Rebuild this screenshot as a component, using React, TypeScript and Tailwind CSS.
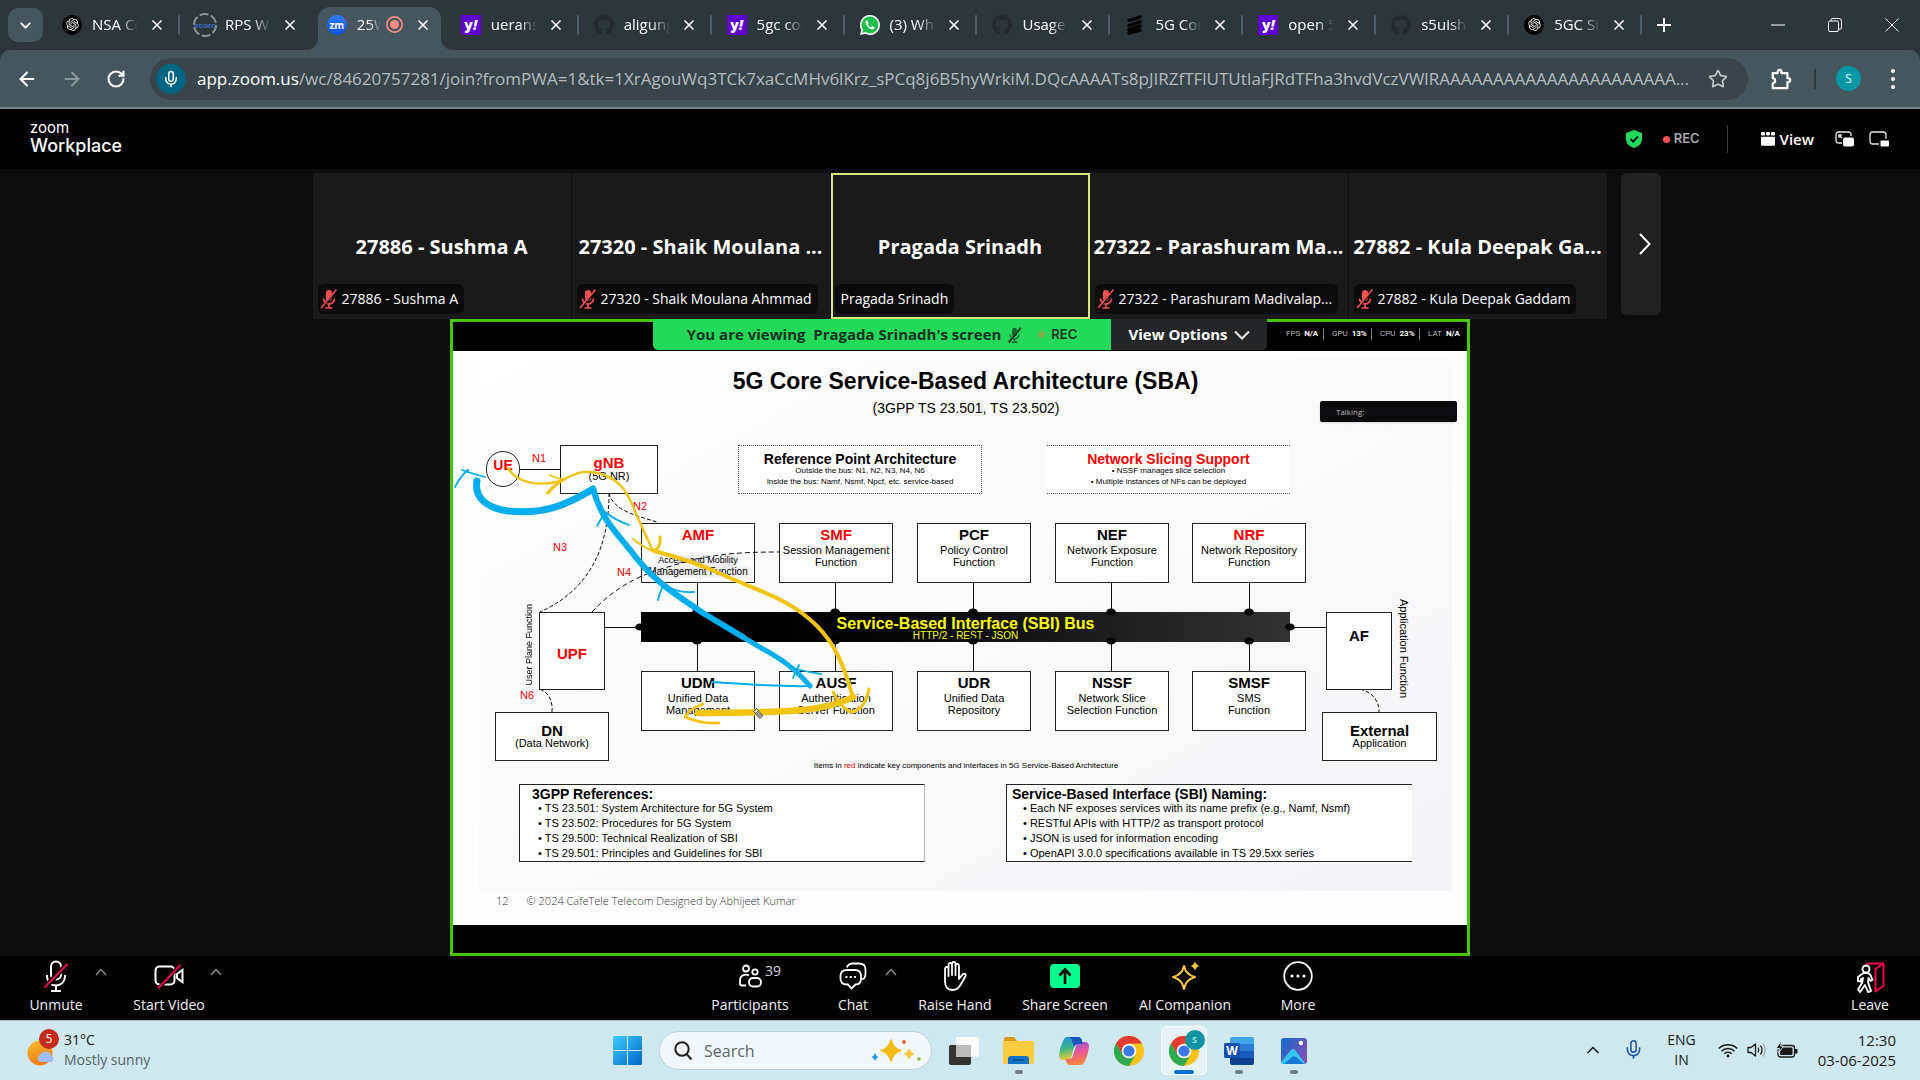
import type { ReactNode } from "react";
import { ArrowLeft, ArrowRight, ChevronDown, ChevronUp, Mic, RotateCw, Star, X } from "lucide-react";
import { RiOpenaiFill } from "react-icons/ri";
import { FaGithub, FaWhatsapp } from "react-icons/fa";

const ui = "font-['Open_Sans','Noto_Sans',sans-serif]";
const arial = "font-['Liberation_Sans',sans-serif]";

/* ---------- browser tabs ---------- */

const OpenAi = () => (
  <span className="flex size-5 items-center justify-center rounded-full bg-black text-white">
    <RiOpenaiFill className="size-[15px]" />
  </span>
);
const Yahoo = () => (
  <span className="flex size-5 items-center justify-center bg-[#5f01d1] text-[14px] leading-none font-extrabold text-white">
    y<i>!</i>
  </span>
);
const GitHub = () => <FaGithub className="size-5 text-[#24292e]" />;
const Rps = () => (
  <svg viewBox="0 0 26 26" className="-mx-[3px] size-[26px]" aria-hidden="true">
    <circle cx="13" cy="13" r="11" fill="none" stroke="#8b9297" strokeWidth="2" strokeDasharray="9 2.5" />
    <text x="13" y="16" textAnchor="middle" fontSize="8" fontWeight="800" fill="#3f6fc4" fontFamily="Liberation Sans">ecorc</text>
  </svg>
);
const ZoomFav = () => (
  <span className="flex size-5 items-center justify-center rounded-full bg-gradient-to-b from-[#2f7cff] to-[#0b4fe0] text-[10px] leading-none font-bold text-white">
    zm
  </span>
);
const WhatsApp = () => (
  <svg viewBox="0 0 20 20" className="size-5" aria-hidden="true">
    <path d="M10 0a10 10 0 1 1-4.800 18.800L0 20l1.300-5A10 10 0 0 1 10 0Z" fill="#fff" />
    <path d="M10 1.600a8.400 8.400 0 1 1-4.500 15.500L2.300 17.900l.8-3A8.400 8.400 0 0 1 10 1.600Z" fill="#1fbf4c" />
    <path d="M7 5.200c-1.200.3-1.700 1.600-1.300 3 .9 3 3 5.200 6 6 1.500.4 2.900-.3 3-1.800l-2.400-1.300-1.200 1.300c-1.500-.6-2.700-1.800-3.300-3.200L8.900 8Z" fill="#fff" />
  </svg>
);
const Stripes = () => (
  <svg viewBox="0 0 20 20" className="size-5" aria-hidden="true">
    <path d="M4 5.500 15 2M4 10.500 15 7M4 14.500 15 11M4 18 15 15" stroke="#000" strokeWidth="3.400" strokeLinecap="round" />
  </svg>
);

type Tab = { title: string; icon: ReactNode; active?: boolean; bar?: boolean };
const tabs: Tab[] = [
  { title: "NSA Core", icon: <OpenAi />, bar: true },
  { title: "RPS Wir", icon: <Rps /> },
  { title: "25W", icon: <ZoomFav />, active: true },
  { title: "ueransim", icon: <Yahoo />, bar: true },
  { title: "aligungr", icon: <GitHub />, bar: true },
  { title: "5gc core", icon: <Yahoo />, bar: true },
  { title: "(3) Wha", icon: <WhatsApp />, bar: true },
  { title: "Usage ", icon: <GitHub />, bar: true },
  { title: "5G Core", icon: <Stripes />, bar: true },
  { title: "open 5g", icon: <Yahoo />, bar: true },
  { title: "s5uishid", icon: <GitHub />, bar: true },
  { title: "5GC Sim", icon: <OpenAi />, bar: true },
];

function BrowserTab({ tab }: { tab: Tab }) {
  return (
    <div className="relative flex min-w-0 flex-1 items-end px-[5px]">
      <div
        className={
          tab.active
            ? "relative flex h-[43px] w-full items-center rounded-t-[12px] bg-[#46565f] pr-[10px] pb-2 pl-[9px]"
            : "relative flex h-[43px] w-full items-center pr-[10px] pb-2 pl-[10px]"
        }
      >
        {tab.active && (
          <>
            <svg viewBox="0 0 12 12" className="absolute bottom-0 -left-3 size-3" aria-hidden="true">
              <path d="M12 0v12H0A12 12 0 0 0 12 0Z" fill="#46565f" />
            </svg>
            <svg viewBox="0 0 12 12" className="absolute -right-3 bottom-0 size-3" aria-hidden="true">
              <path d="M0 0v12h12A12 12 0 0 1 0 0Z" fill="#46565f" />
            </svg>
          </>
        )}
        <button className="flex min-w-0 flex-1 items-center gap-[10px] text-left">
          <span className="shrink-0">{tab.icon}</span>
          <span
            className={
              tab.active
                ? "w-6 overflow-hidden [mask-image:linear-gradient(to_right,#000_50%,transparent)] text-[15px] whitespace-nowrap"
                : "w-[46px] overflow-hidden [mask-image:linear-gradient(to_right,#000_60%,transparent)] text-[15px] whitespace-nowrap"
            }
          >
            {tab.title}
          </span>
          {tab.active && (
            <svg viewBox="0 0 16 16" className="-ml-[5px] size-[17px] shrink-0" aria-label="Recording">
              <circle cx="8" cy="8" r="7.200" fill="none" stroke="#f28b82" strokeWidth="1.600" />
              <circle cx="8" cy="8" r="4.300" fill="#f28b82" />
            </svg>
          )}
        </button>
        <button aria-label="Close tab" className="shrink-0">
          <X className="size-4" strokeWidth={2.500} />
        </button>
      </div>
      {tab.bar && <span className="absolute top-[15px] right-0 h-5 w-[2px] rounded bg-[#4c5e67]" />}
    </div>
  );
}

function BrowserChrome() {
  return (
    <header className="bg-[#2c363b] text-white">
      <div className="flex h-[50px] items-stretch pl-2">
        <button aria-label="Search tabs" className="mt-2 flex h-[34px] w-[35px] items-center justify-center rounded-[10px] bg-[#46565f]">
          <ChevronDown className="size-[17px]" strokeWidth={2.800} />
        </button>
        <nav className="ml-[4px] flex min-w-0 flex-1">
          {tabs.map((t) => (
            <BrowserTab key={t.title} tab={t} />
          ))}
        </nav>
        <button aria-label="New tab" className="ml-[12px] flex w-5 items-center justify-center">
          <svg viewBox="0 0 14 14" className="size-[14px]"><path d="M7 0v14M0 7h14" stroke="#fff" strokeWidth="2" /></svg>
        </button>
        <div className="ml-[75px] flex">
          <button aria-label="Minimize" className="flex w-[57px] items-center justify-center">
            <svg viewBox="0 0 14 14" className="size-[14px]"><path d="M0 7h14" stroke="#fff" /></svg>
          </button>
          <button aria-label="Restore" className="flex w-[57px] items-center justify-center">
            <svg viewBox="0 0 14 14" className="size-[14px]" fill="none" stroke="#fff">
              <rect x=".5" y="3" width="10" height="10.500" rx="1.500" />
              <path d="M3 3V1.500Q3 .5 4 .5h7Q13.500 .5 13.500 3v7Q13.500 11 12.500 11H10.500" />
            </svg>
          </button>
          <button aria-label="Close window" className="flex w-[57px] items-center justify-center">
            <svg viewBox="0 0 14 14" className="size-[14px]"><path d="M.5.5l13 13M13.500.5l-13 13" stroke="#fff" /></svg>
          </button>
        </div>
      </div>
      <div className="flex h-[59px] items-center rounded-t-[10px] border-b-2 border-[#6f848d] bg-[#46565f] pr-[19px] pl-4">
        <div className="flex w-[134px] items-center gap-[23px]">
          <button aria-label="Back"><ArrowLeft className="size-[22px]" strokeWidth={2.200} /></button>
          <button aria-label="Forward" className="text-[#8a979d]"><ArrowRight className="size-[22px]" strokeWidth={2.200} /></button>
          <button aria-label="Reload"><RotateCw className="size-5" strokeWidth={2.500} /></button>
        </div>
        <div className="flex h-[42px] min-w-0 flex-1 items-center rounded-full bg-[#3a454b] pr-[20px] pl-[6px]">
          <button aria-label="Microphone in use" className="mr-[11px] flex size-[30px] shrink-0 items-center justify-center rounded-full bg-[#006684]">
            <Mic className="size-[18px]" />
          </button>
          <label htmlFor="url" className="text-[17px] leading-6">app.zoom.us</label>
          <input
            id="url"
            readOnly
            className="min-w-0 flex-1 bg-transparent text-[17px] leading-6 text-ellipsis text-[#b4babd] outline-none"
            value="/wc/84620757281/join?fromPWA=1&tk=1XrAgouWq3TCk7xaCcMHv6lKrz_sPCq8j6B5hyWrkiM.DQcAAAATs8pJIRZfTFlUTUtIaFJRdTFha3hvdVczVWlRAAAAAAAAAAAAAAAAAAAAAA..."
          />
          <button aria-label="Bookmark" className="ml-[17px] text-[#c3c8ca]"><Star className="size-5" strokeWidth={2} /></button>
        </div>
        <button aria-label="Extensions" className="ml-[22px]">
          <svg viewBox="0 0 24 24" className="size-[22px]" fill="none" stroke="#fff" strokeWidth="2.400" strokeLinejoin="round">
            <path d="M3 5.500h5.500V4a2 2 0 0 1 4 0v1.500H19V11h.8a2.200 2.200 0 0 1 0 4.400H19V22H3v-5.500a2.600 2.600 0 0 0 0-5.200Z" />
          </svg>
        </button>
        <span className="ml-[22px] h-5 w-[2px] bg-[#2e393f]" />
        <button className="ml-[20px] flex size-[25px] items-center justify-center rounded-full bg-[#0097a7] text-[12px]">S</button>
        <button aria-label="Browser menu" className="ml-[24px] flex w-4 flex-col items-center gap-[4px]">
          <span className="size-1 rounded-full bg-white" />
          <span className="size-1 rounded-full bg-white" />
          <span className="size-1 rounded-full bg-white" />
        </button>
      </div>
    </header>
  );
}

/* ---------- meeting header ---------- */

function MeetingHeader() {
  return (
    <div className="flex h-[60px] items-center bg-black pr-[31px] pl-[30px] text-white">
      <div className="pb-1 font-[Inter,sans-serif]">
        <div className="text-[15px] leading-[16px]">zoom</div>
        <div className="text-[18px] leading-[19px] font-medium">Workplace</div>
      </div>
      <div className="ml-auto flex items-center">
        <svg viewBox="0 0 16 18" className="h-[18px] w-4" aria-label="Encrypted">
          <path d="M8 0 16 3v6c0 4.500-3.500 7.500-8 9-4.500-1.500-8-4.500-8-9V3Z" fill="#23d959" />
          <path d="m4.500 9 2.600 2.600L12 6.500" fill="none" stroke="#000" strokeWidth="1.800" />
        </svg>
        <span className="ml-[21px] size-[7px] rounded-full bg-[#ff5050]" />
        <span className="ml-[4px] font-[Inter,sans-serif] text-[13px] font-semibold text-[#a5a5a5]">REC</span>
        <span className="mr-[33px] ml-[27px] h-7 w-px bg-[#404040]" />
        <button className="flex items-center gap-[5px] text-[15px] font-semibold">
          <svg viewBox="0 0 14 14" className="size-[14px]" fill="#fff">
            <rect width="4" height="3.500" rx="1" /><rect x="5" width="4" height="3.500" rx="1" /><rect x="10" width="4" height="3.500" rx="1" />
            <rect y="4.800" width="14" height="9" rx="1" />
          </svg>
          View
        </button>
        <button aria-label="Floating window" className="ml-[21px]">
          <svg viewBox="0 0 20 16" className="h-4 w-5" fill="none" stroke="#e8e8e8" strokeWidth="1.300">
            <path d="M7 12H3.500A2.500 2.500 0 0 1 1 9.500v-6A2.500 2.500 0 0 1 3.500 1h10A2.500 2.500 0 0 1 16 3.500V5M4 4l3 3M4 6.800V4h2.800" />
            <rect x="8" y="6.500" width="11" height="9" rx="2" fill="#fff" stroke="none" />
          </svg>
        </button>
        <button aria-label="Minimize meeting" className="ml-[14px]">
          <svg viewBox="0 0 20 16" className="h-4 w-5" fill="none" stroke="#e8e8e8" strokeWidth="1.300">
            <path d="M10 13H3.500A2.500 2.500 0 0 1 1 10.500v-7A2.500 2.500 0 0 1 3.500 1h11A2.500 2.500 0 0 1 17 3.500V8" />
            <rect x="11.500" y="9.500" width="8.500" height="6" rx="1" fill="#fff" stroke="none" />
          </svg>
        </button>
      </div>
    </div>
  );
}

/* ---------- participant strip ---------- */

const people = [
  { name: "27886 - Sushma A", label: "27886 - Sushma A", muted: true },
  { name: "27320 - Shaik Moulana ...", label: "27320 - Shaik Moulana Ahmmad", muted: true },
  { name: "Pragada Srinadh", label: "Pragada Srinadh", speaking: true },
  { name: "27322 - Parashuram Ma...", label: "27322 - Parashuram Madivalap...", muted: true },
  { name: "27882 - Kula Deepak Ga...", label: "27882 - Kula Deepak Gaddam", muted: true },
];

const MutedMic = ({ className }: { className: string }) => (
  <svg viewBox="0 0 18 20" className={className} aria-hidden="true">
    <rect x="6" y="1" width="6" height="11" rx="3" fill="currentColor" />
    <path d="M3.500 9.500a5.500 5.500 0 0 0 11 0M9 15v4M5.500 19h7" fill="none" stroke="currentColor" strokeWidth="1.700" />
    <path d="M17 1.500 2 19.500" stroke="#0d0d0d" strokeWidth="1.500" />
    <path d="M16.500.5 1 19" stroke="currentColor" strokeWidth="1.500" />
  </svg>
);

function ParticipantStrip() {
  return (
    <div className="grid grid-cols-[1fr_auto_1fr] pt-1 text-white">
      <ul className="col-start-2 flex h-[146px]">
        {people.map((p) => (
          <li
            key={p.name}
            className={
              p.speaking
                ? "relative flex w-[259px] items-center justify-center border-2 border-[#d9e87c] bg-[#1a1a1a] pt-[2px]"
                : "relative flex w-[259px] items-center justify-center border-r border-[#0d0d0d] bg-[#1a1a1a] pt-[2px]"
            }
          >
            <span className="text-[20px] leading-7 font-bold whitespace-nowrap">{p.name}</span>
            <span
              className={
                p.speaking
                  ? "absolute bottom-[3px] left-[2px] flex h-[30px] items-center rounded-[6px] bg-[#0b0b0b] px-[6px] pb-[2px] text-[14px] whitespace-nowrap"
                  : "absolute bottom-[5px] left-[5px] flex h-[30px] items-center gap-[4px] rounded-[6px] bg-[#0b0b0b] pr-[6px] pb-[2px] pl-[2px] text-[14px] whitespace-nowrap"
              }
            >
              {p.muted && <MutedMic className="mt-[2px] h-5 w-[18px] text-[#f4504f]" />}
              {p.label}
            </span>
          </li>
        ))}
      </ul>
      <button aria-label="Next participants" className="ml-[13px] flex h-[142px] w-10 items-center justify-center rounded-[6px] bg-[#212121]">
        <svg viewBox="0 0 12 22" className="ml-2 h-[22px] w-3" fill="none" stroke="#fff" strokeWidth="2"><path d="m1 1 9.500 10L1 21" /></svg>
      </button>
    </div>
  );
}

/* ---------- shared slide ---------- */

type Fn = { title: string; lines: string[]; red?: boolean; at: string };
const functions: Fn[] = [
  { title: "SMF", lines: ["Session Management", "Function"], red: true, at: "left-[326px] top-[172px]" },
  { title: "PCF", lines: ["Policy Control", "Function"], at: "left-[464px] top-[172px]" },
  { title: "NEF", lines: ["Network Exposure", "Function"], at: "left-[602px] top-[172px]" },
  { title: "NRF", lines: ["Network Repository", "Function"], red: true, at: "left-[739px] top-[172px]" },
  { title: "UDM", lines: ["Unified Data", "Management"], at: "left-[188px] top-[320px]" },
  { title: "AUSF", lines: ["Authentication", "Server Function"], at: "left-[326px] top-[320px]" },
  { title: "UDR", lines: ["Unified Data", "Repository"], at: "left-[464px] top-[320px]" },
  { title: "NSSF", lines: ["Network Slice", "Selection Function"], at: "left-[602px] top-[320px]" },
  { title: "SMSF", lines: ["SMS", "Function"], at: "left-[739px] top-[320px]" },
];

const columns = [244, 382, 520, 658, 796];

const references = [
  "TS 23.501: System Architecture for 5G System",
  "TS 23.502: Procedures for 5G System",
  "TS 29.500: Technical Realization of SBI",
  "TS 29.501: Principles and Guidelines for SBI",
];
const naming = [
  "Each NF exposes services with its name prefix (e.g., Namf, Nsmf)",
  "RESTful APIs with HTTP/2 as transport protocol",
  "JSON is used for information encoding",
  "OpenAPI 3.0.0 specifications available in TS 29.5xx series",
];

function SlideLines() {
  return (
    <svg viewBox="0 0 1014 574" className="absolute inset-0 h-full w-full" fill="none" stroke="#111" aria-hidden="true">
      <path d="M67 118.500h40M152 276.500h35M837 276.500h36" strokeWidth="1" />
      {columns.map((x) => (
        <path key={x} d={`M${x + 0.5} 231v30M${x + 0.5} 290v30`} />
      ))}
      <path d="M156 142C156 195 138 238 87 261M156 142C160 160 185 165 204 171M87 338C96 342 100 350 99 361M907 338C918 341 926 348 926 361" strokeDasharray="4 2" />
    </svg>
  );
}

function SlideDots() {
  return (
    <svg viewBox="0 0 1014 574" className="absolute inset-0 h-full w-full" aria-hidden="true">
      {columns.map((x) => (
        <g key={x}>
          <ellipse cx={x} cy="261" rx="4.800" ry="3.600" />
          <ellipse cx={x} cy="290" rx="4.800" ry="3.600" />
        </g>
      ))}
      <ellipse cx="187" cy="276" rx="4.800" ry="3.600" />
      <ellipse cx="837" cy="276" rx="4.800" ry="3.600" />
      <path d="M139 261C160 238 185 224 215 216C255 203 285 201 326 201" fill="none" stroke="#111" strokeDasharray="5 3" />
    </svg>
  );
}

function Ink() {
  return (
    <svg viewBox="0 0 1014 574" className="absolute inset-0 h-full w-full" fill="none" strokeLinecap="round" strokeLinejoin="round" aria-hidden="true">
      <g stroke="#00adef">
        <path d="M24 130C21 147 34 157 55 160C92 164 115 153 140 138" strokeWidth="7" />
        <path d="M140 138C149 168 160 178 178 200C200 230 222 243 250 262L290 286" strokeWidth="6" />
        <path d="M288 285L310 298C328 308 343 318 357 335" strokeWidth="5" />
        <path d="M357 335C325 336 292 333 259 331" strokeWidth="2" />
        <path d="M2 136C6 128 10 123 15 119M9 119Q20 123 32 126M15 121V119" strokeWidth="1.800" />
        <path d="M144 175L152 161Q162 169 176 174M205 249Q207 240 211 234M217 237Q228 242 241 241M340 327Q343 320 346 314M343 318Q355 321 368 323" strokeWidth="1.800" />
      </g>
      <g stroke="#f2c40f">
        <path d="M55 117C64 132 85 135 103 131C115 128 122 120 136 121C166 123 175 141 184 165L199 198" strokeWidth="2.400" />
        <path d="M97 124Q104 128 112 128Q102 133 94 142M180 188Q190 196 200 200" strokeWidth="2" />
        <path d="M112 128Q102 133 95 142M207 186Q208 198 201 199" strokeWidth="3" />
        <path d="M201 200C230 207 252 215 277 227C315 243 340 251 364 275C382 293 391 315 399 343" strokeWidth="4" />
        <path d="M400 346C368 363 315 361 245 362" strokeWidth="6.500" />
        <path d="M250 353Q236 358 232 366Q248 373 266 372" strokeWidth="2.600" />
        <path d="M380 341Q388 357 398 361Q412 359 416 338" strokeWidth="3" />
      </g>
      <g transform="translate(304 358) rotate(50)" stroke="#333" strokeWidth=".8">
        <rect width="9" height="4" fill="#eee" />
        <path d="M2 1.300h6M2 2.700h6" />
      </g>
    </svg>
  );
}

const boxBase = "absolute flex flex-col items-center border border-[#222] bg-white text-center";

function Slide() {
  return (
    <div className={`relative h-[574px] w-[1014px] overflow-hidden bg-[#fefdff] text-black ${arial}`}>
      <div className="absolute top-[7px] left-[26px] h-[533px] w-[973px] bg-gradient-to-br from-white via-[#fafafa] to-[#f5f4f8]" />
      <h1 className="absolute top-[16px] right-0 left-[11px] text-center text-[23px] leading-7 font-bold">
        5G Core Service-Based Architecture (SBA)
      </h1>
      <p className="absolute top-[48px] right-0 left-[12px] text-center text-[14px] leading-[18px]">(3GPP TS 23.501, TS 23.502)</p>
      <SlideLines />

      <div className="absolute top-[50px] left-[867px] flex h-[21px] w-[137px] items-center rounded-[2px] bg-[#0c0b0e] pl-[16px] font-['Open_Sans',sans-serif] text-[8px] text-[#bbb] shadow">
        Talking:
      </div>

      <div className="absolute top-[100px] left-[33px] flex h-[36px] w-[34px] justify-center rounded-full border border-[#222] bg-white pt-[5px] text-[14px] leading-4 font-bold text-[#f00]">UE</div>
      <div className={`${boxBase} top-[94px] left-[107px] h-[49px] w-[98px] pt-[9px]`}>
        <b className="text-[15px] leading-4 text-[#f00]">gNB</b>
        <span className="text-[11px] leading-[10px]">(5G NR)</span>
      </div>
      <div className={`${boxBase} top-[172px] left-[188px] h-[60px] w-[114px] pt-[3px]`}>
        <b className="text-[15px] leading-4 text-[#f00]">AMF</b>
        <span className="mt-[12px] bg-[#f1f0f2] text-[9px] leading-[11px]">Access and Mobility</span>
        <span className="bg-[#f1f0f2] text-[10px] leading-[12px] whitespace-nowrap">Management Function</span>
      </div>
      {functions.map((f) => (
        <div key={f.title} className={`${boxBase} ${f.at} h-[60px] w-[114px] pt-[3px]`}>
          <b className={f.red ? "mb-[1px] text-[15px] leading-4 text-[#f00]" : "mb-[1px] text-[15px] leading-4"}>{f.title}</b>
          {f.lines.map((l) => (
            <span key={l} className="text-[11px] leading-[12px] whitespace-nowrap">{l}</span>
          ))}
        </div>
      ))}

      <div className="absolute top-[94px] left-[285px] h-[49px] w-[244px] border border-dotted border-[#555] bg-white pt-[5px] text-center">
        <b className="block text-[14px] leading-4">Reference Point Architecture</b>
        <p className="text-[8px] leading-[7px]">Outside the bus: N1, N2, N3, N4, N6</p>
        <p className="mt-[1px] text-[8px] leading-[14px]">Inside the bus: Namf, Nsmf, Npcf, etc. service-based</p>
      </div>
      <div className="absolute top-[94px] left-[594px] h-[49px] w-[243px] border-y border-dotted border-[#555] bg-white pt-[5px] text-center">
        <b className="block text-[14px] leading-4 text-[#f00]">Network Slicing Support</b>
        <p className="text-[8px] leading-[7px]">• NSSF manages slice selection</p>
        <p className="mt-[1px] text-[8px] leading-[14px]">• Multiple instances of NFs can be deployed</p>
      </div>

      <div className="absolute top-[261px] left-[188px] h-[30px] w-[649px] bg-gradient-to-r from-black to-[#333] pt-[4px] text-center text-[#ff0]">
        <b className="block text-[16px] leading-4">Service-Based Interface (SBI) Bus</b>
        <span className="block text-[10px] leading-[7px]">HTTP/2 - REST - JSON</span>
      </div>

      <div className={`${boxBase} top-[261px] left-[86px] h-[78px] w-[66px] justify-center pt-[6px]`}>
        <b className="text-[15px] leading-4 text-[#f00]">UPF</b>
      </div>
      <div className={`${boxBase} top-[261px] left-[873px] h-[78px] w-[66px] pt-[15px]`}>
        <b className="text-[15px] leading-4">AF</b>
      </div>
      <div className={`${boxBase} top-[361px] left-[42px] h-[49px] w-[114px] pt-[10px]`}>
        <b className="text-[15px] leading-4">DN</b>
        <span className="text-[11px] leading-[9px]">(Data Network)</span>
      </div>
      <div className={`${boxBase} top-[361px] left-[869px] h-[49px] w-[115px] pt-[10px]`}>
        <b className="text-[15px] leading-4">External</b>
        <span className="text-[11px] leading-[9px]">Application</span>
      </div>
      <span className="absolute top-[253px] left-[70px] rotate-180 text-[9px] leading-3 whitespace-nowrap [writing-mode:vertical-rl]">User Plane Function</span>
      <span className="absolute top-[248px] left-[945px] text-[11px] leading-3 whitespace-nowrap [writing-mode:vertical-rl]">Application Function</span>

      <SlideDots />
      <div className="text-[11px] leading-3 text-[#f00]">
        <span className="absolute top-[101px] left-[79px]">N1</span>
        <span className="absolute top-[149px] left-[180px]">N2</span>
        <span className="absolute top-[190px] left-[100px]">N3</span>
        <span className="absolute top-[215px] left-[164px]">N4</span>
        <span className="absolute top-[338px] left-[67px]">N6</span>
      </div>

      <p className="absolute top-[409px] right-0 left-[12px] text-center text-[8px] leading-3">
        Items in <span className="text-[#f00]">red</span> indicate key components and interfaces in 5G Service-Based Architecture
      </p>
      <div className="absolute top-[433px] left-[66px] h-[78px] w-[406px] border border-[#222] border-r-[#bbb] bg-white pt-[2px] pl-[12px]">
        <b className="block text-[14px] leading-[14px]">3GPP References:</b>
        <ul className="pl-[6px] text-[11px] leading-[15px]">
          {references.map((r) => <li key={r}>• {r}</li>)}
        </ul>
      </div>
      <div className="absolute top-[433px] left-[553px] h-[78px] w-[406px] border border-r-0 border-[#222] bg-white pt-[2px] pl-[5px]">
        <b className="block text-[14px] leading-[14px]">Service-Based Interface (SBI) Naming:</b>
        <ul className="pl-[11px] text-[11px] leading-[15px]">
          {naming.map((r) => <li key={r}>• {r}</li>)}
        </ul>
      </div>
      <div className="absolute top-[542px] left-[43px] flex gap-[18px] font-['Open_Sans',sans-serif] text-[11px] leading-4 font-light text-[#333]">
        <span>12</span>
        <span>© 2024 CafeTele Telecom Designed by Abhijeet Kumar</span>
      </div>
      <Ink />
    </div>
  );
}

const stats = [
  ["FPS", "N/A"],
  ["GPU", "13%"],
  ["CPU", "23%"],
  ["LAT", "N/A"],
];

function SharedScreen() {
  return (
    <section className="relative mx-auto flex w-fit flex-1 flex-col border-[3px] border-[#4bc405] bg-black">
      <div className="absolute -top-[3px] left-1/2 flex h-[31px] -translate-x-1/2 overflow-hidden rounded-b-[5px] whitespace-nowrap">
        <div className="flex w-[458px] items-center justify-center gap-[6px] bg-[#23d959] text-[15px] font-bold text-[#15351f]">
          <span>You are viewing&nbsp; Pragada Srinadh's screen</span>
          <MutedMic className="h-4 w-[15px] text-[#15602d]" />
          <span className="ml-[10px] size-[7px] rounded-full bg-[#7fae4c]" />
          <span className="font-[Inter,sans-serif] text-[13px] font-semibold">REC</span>
        </div>
        <button className="flex w-[156px] items-center justify-center gap-[6px] bg-[#242628] text-[15px] font-bold text-white">
          View Options
          <svg viewBox="0 0 16 10" className="h-[10px] w-4" fill="none" stroke="#ddd" strokeWidth="2.200"><path d="m1 1.500 7 7 7-7" /></svg>
        </button>
      </div>
      <dl className="flex h-[29px] items-center justify-end pb-[6px] font-[Roboto,sans-serif] text-[8px] text-[#bbb]">
        {stats.map(([k, v], i) => (
          <div key={k} className={i ? "flex w-12 gap-[4px] border-l border-[#777] pl-[8px]" : "flex w-[37px] gap-[4px]"}>
            <dt>{k}</dt>
            <dd className="font-bold text-white">{v}</dd>
          </div>
        ))}
      </dl>
      <Slide />
    </section>
  );
}

/* ---------- meeting controls ---------- */

function Control({ label, width, children }: { label: string; width: string; children: ReactNode }) {
  return (
    <button className={`relative flex flex-col items-center ${width}`}>
      <span className="flex h-[39px] items-center justify-center">{children}</span>
      <span className="text-[14px] leading-5 font-medium whitespace-nowrap">{label}</span>
    </button>
  );
}
const More = ({ label }: { label: string }) => (
  <button aria-label={label} className="flex h-8 w-5 items-center justify-center text-[#8c8c8c]">
    <svg viewBox="0 0 12 8" className="h-2 w-3" fill="none" stroke="currentColor" strokeWidth="1.500"><path d="m1 7 5-5.500L11 7" /></svg>
  </button>
);

function Controls() {
  return (
    <footer className="grid h-16 grid-cols-[1fr_auto_1fr] bg-black text-[#f2f2f2]">
      <div className="flex pl-[21px]">
        <Control label="Unmute" width="w-[70px]">
          <svg viewBox="0 0 26 32" className="h-8 w-[26px]" fill="none" stroke="#fff" strokeWidth="2">
            <rect x="8" y="1.500" width="10" height="18" rx="5" /><path d="M4 15v1.500a9 9 0 0 0 18 0V15M13 25.500V31M8 31h10" />
            <path d="M24 4 1.500 28" stroke="#000" strokeWidth="5" /><path d="M24.500 4 1.500 27.500" stroke="#f5004f" />
          </svg>
        </Control>
        <More label="Audio options" />
        <Control label="Start Video" width="ml-[21px] w-[74px]">
          <svg viewBox="0 0 30 26" className="h-[26px] w-[30px]" fill="none" stroke="#fff" strokeWidth="2">
            <rect x="1.500" y="3.500" width="19" height="18" rx="4" /><path d="m23 11 5.500-4v12L23 15Z" />
            <path d="M26 2 4 26" stroke="#000" strokeWidth="4" /><path d="M26.500 2 4 25.500" stroke="#f5004f" />
          </svg>
        </Control>
        <More label="Video options" />
      </div>
      <div className="flex pl-[119px]">
        <Control label="Participants" width="w-[116px]">
          <svg viewBox="0 0 24 24" className="h-6 w-6" fill="none" stroke="#fff" strokeWidth="1.800">
            <circle cx="8" cy="4.500" r="3" /><circle cx="17" cy="8" r="2.700" />
            <path d="M11 11.500C8 9.800 2 10.500 2 17v2.500q0 2 2 2h4" /><rect x="11" y="14" width="12" height="8.500" rx="4" />
          </svg>
          <span className="absolute top-[5px] left-[73px] text-[14px] leading-5 text-[#d0d0d0]">39</span>
        </Control>
        <Control label="Chat" width="ml-[17px] w-14">
          <svg viewBox="0 0 28 28" className="size-7" fill="none" stroke="#fff" strokeWidth="1.800">
            <path d="M8 5.500Q9 1.500 14 1.500h6q6.500 0 6.500 6v4q0 5-3.500 6" />
            <path d="M8 8h8q6 0 6 6v2.500q0 6-5.500 6l-4 4-3.500-4H8q-6.500 0-6.500-6V14q0-6 6.500-6Z" />
            <path d="M6.500 15h2m2.200 0h2m2.200 0h2" strokeWidth="2" />
          </svg>
        </Control>
        <More label="Chat options" />
        <Control label="Raise Hand" width="w-[108px]">
          <svg viewBox="0 0 26 30" className="h-[30px] w-[26px]" fill="none" stroke="#fff" strokeWidth="1.800" strokeLinejoin="round" strokeLinecap="round">
            <path d="M3 18V8q0-2 1.700-2T6.500 8v7V4q0-2 1.800-2T10 4v10V3q0-2 1.800-2t1.700 2v11V5q0-2 1.800-2T17 5v13l3.500-4.500q1.500-1.500 2.800-.5 1 .8 0 2.500L19 23q-3 6-8.500 6Q3 29 3 20Z" />
          </svg>
        </Control>
        <Control label="Share Screen" width="w-[112px]">
          <svg viewBox="0 0 30 24" className="h-6 w-[30px]">
            <rect width="30" height="24" rx="4" fill="#00ff8c" /><path d="M15 20V6M9.500 11.500 15 5.500l5.500 6" fill="none" stroke="#000" strokeWidth="2.600" />
          </svg>
        </Control>
        <Control label="AI Companion" width="w-[128px]">
          <svg viewBox="0 0 30 30" className="size-[30px]">
            <path d="M14 5c1.500 6.500 4.500 9.500 11 11-6.500 2-9.500 5-11 12-1.500-7-4.500-10-11-12 6.500-1.500 9.500-4.500 11-11Z" fill="none" stroke="#fcc83c" strokeWidth="2" strokeLinejoin="round" />
            <path d="M25 0q.8 4.200 5 5-4.200.8-5 5-.8-4.200-5-5 4.200-.8 5-5Z" fill="#fcc83c" />
          </svg>
        </Control>
        <Control label="More" width="w-[98px]">
          <svg viewBox="0 0 30 30" className="size-[30px]">
            <circle cx="15" cy="15" r="13.800" fill="none" stroke="#fff" strokeWidth="1.800" />
            <g fill="#fff"><circle cx="9" cy="15" r="1.600" /><circle cx="15" cy="15" r="1.600" /><circle cx="21" cy="15" r="1.600" /></g>
          </svg>
        </Control>
      </div>
      <div className="flex justify-end pr-[20px]">
        <Control label="Leave" width="w-[60px]">
          <svg viewBox="0 0 30 32" className="mt-1 h-8 w-[30px]" fill="none" strokeLinejoin="round" strokeLinecap="round">
            <path d="M12 1.500h16.500V24L20.500 29.500V7L28.500 1.500" stroke="#f5004f" strokeWidth="1.900" />
            <g stroke="#fff" strokeWidth="1.900">
              <circle cx="11" cy="7" r="3.500" />
              <path d="M8.500 11 3 15v4l3 .5v-2.500L8 16l-1 5-4 6.500 2 2.500 5-7 3 7 3-1-3-9 .5-4 2 3 2-1-2-5-2.500-2Z" />
            </g>
          </svg>
        </Control>
      </div>
    </footer>
  );
}

/* ---------- taskbar ---------- */

const Chrome = () => (
  <svg viewBox="0 0 30 30" className="size-[30px]" aria-hidden="true">
    <circle cx="15" cy="15" r="15" fill="#fbc116" />
    <path d="M2 7.500A15 15 0 0 1 28 7.500H15L8.500 18.700Z" fill="#e33b2e" />
    <path d="M2 7.500A15 15 0 0 0 15 30l6.500-11.200H8.500Z" fill="#2da94f" />
    <circle cx="15" cy="15" r="7.300" fill="#fff" /><circle cx="15" cy="15" r="5.600" fill="#3b78e7" />
  </svg>
);

function TaskIcon({ label, running, active, children }: { label: string; running?: boolean; active?: boolean; children: ReactNode }) {
  return (
    <button aria-label={label} className="relative flex w-[55px] items-center justify-center">
      {active && <span className="absolute top-[5px] h-[49px] w-[46px] rounded-[5px] border border-[#f3f9fb] bg-[#e6f2f7]" />}
      <span className="relative">{children}</span>
      {running && <span className="absolute bottom-[6px] h-1 w-2 rounded-full bg-[#6f7d84]" />}
      {active && <span className="absolute bottom-[6px] h-1 w-5 rounded-full bg-[#0a6fd0]" />}
    </button>
  );
}

function Taskbar() {
  return (
    <div className="grid h-[60px] grid-cols-[1fr_auto_1fr] border-t border-[#a9b6bb] bg-[#cfe7ee] text-[#1b1b1b]">
      <button className="flex items-center pb-[2px] pl-[26px] text-left">
        <span className="relative">
          <svg viewBox="0 0 32 34" className="h-[34px] w-8" aria-hidden="true">
            <defs>
              <linearGradient id="sun" x2="0.300" y2="1"><stop stopColor="#f5c02c" /><stop offset="1" stopColor="#f47b16" /></linearGradient>
            </defs>
            <circle cx="14" cy="20" r="12.500" fill="url(#sun)" />
            <path d="M14 29a4 4 0 0 1 .5-7.500 6 6 0 0 1 11 1.500 3.200 3.200 0 0 1 0 6Z" fill="#9fbdf5" />
          </svg>
          <span className="absolute -top-[4px] left-[13px] flex size-5 items-center justify-center rounded-full bg-[#c42b1c] text-[12px] text-white">5</span>
        </span>
        <span className="ml-[6px] text-[14px] leading-[20px]">
          <span className="block">31°C</span>
          <span className="block text-[#55636a]">Mostly sunny</span>
        </span>
      </button>

      <div className="flex items-stretch gap-1">
        <button aria-label="Start" className="flex w-14 items-center justify-center">
          <svg viewBox="0 0 29 29" className="size-[29px]">
            <defs><linearGradient id="win" x2="1" y2="1"><stop stopColor="#3fcbfb" /><stop offset="1" stopColor="#0067c9" /></linearGradient></defs>
            <path d="M1 0h13v14H0V1ZM15 0h13l1 1v13H15ZM0 15h14v14H1l-1-1ZM15 15h14v13l-1 1H15Z" fill="url(#win)" />
          </svg>
        </button>
        <label className="flex h-[39px] w-[273px] items-center self-center rounded-full border border-[#bfd3da] bg-[#f1f7fa] pr-[10px] pl-[13px]">
          <svg viewBox="0 0 20 20" className="size-5" fill="none" stroke="#222" strokeWidth="2"><circle cx="9" cy="8" r="6.700" /><path d="m13.500 13 5 5.500" /></svg>
          <input placeholder="Search" aria-label="Search" className="ml-[11px] min-w-0 flex-1 bg-transparent text-[16px] outline-none placeholder:text-[#5a666c]" />
          <svg viewBox="0 0 50 24" className="h-6 w-[50px]" aria-hidden="true">
            <path d="M20 1q2.500 9 10 10.500-7.500 2-10 10.500-2.500-8.500-10-10.500Q17.500 10 20 1Z" fill="#f7b916" stroke="#f7b916" strokeWidth="1.500" strokeLinejoin="round" />
            <path d="M38 10q1 4 4.500 5-3.500 1-4.500 5-1-4-4.500-5 3.500-1 4.500-5Z" fill="#f9c538" stroke="#f9c538" strokeLinejoin="round" />
            <path d="M4 14q.8 3 3.500 4-2.700.8-3.500 4-.8-3.200-3.500-4Q3.200 17 4 14Z" fill="#2097e8" />
            <circle cx="33" cy="3" r="2" fill="#e4683c" /><circle cx="48" cy="20" r="1.800" fill="#86b83c" />
          </svg>
        </label>
        <div className="flex">
          <TaskIcon label="Task view">
            <svg viewBox="0 0 30 28" className="h-7 w-[30px]">
              <rect y="8" width="22" height="20" rx="2" fill="#333" /><rect x="7" width="23" height="20" rx="2" fill="#fafafa" />
              <path d="M7 8h15v12H7Z" fill="#bbb" />
            </svg>
          </TaskIcon>
          <TaskIcon label="File Explorer" running>
            <svg viewBox="0 0 31 27" className="h-[27px] w-[31px]">
              <path d="M1 2q0-2 2-2h8l3 4H1Z" fill="#d99a0b" /><path d="M0 4h30q1 0 1 2v19q0 2-2 2H2q-2 0-2-2Z" fill="#fdcb3e" />
              <path d="M5 27v-5q0-3 3-3h15q3 0 3 3v5Z" fill="#1272c9" /><path d="M10 23h11" stroke="#0a4d8e" strokeWidth="1.500" />
            </svg>
          </TaskIcon>
          <TaskIcon label="Copilot">
            <svg viewBox="0 0 30 28" className="h-7 w-[30px]">
              <defs>
                <linearGradient id="cpa" x2="0.200" y2="1"><stop stopColor="#1c8de0" /><stop offset=".55" stopColor="#3bb98a" /><stop offset="1" stopColor="#e9c931" /></linearGradient>
                <linearGradient id="cpb" x2="0.200" y2="1"><stop stopColor="#8d5be8" /><stop offset=".5" stopColor="#e9559a" /><stop offset="1" stopColor="#f5843f" /></linearGradient>
              </defs>
              <path d="M9 0h10q3 0 4 4l.8 3H19q-3 0-4 3.500L12.500 19q-1 4-4.500 4H4q-4 0-4-5Q1 10 4 4t5-4Z" fill="url(#cpa)" />
              <path d="M21 28H11q-3 0-4-4l-.6-2H10q3 0 4-3.500L17 9q1-4 4.500-4H26q4 0 4 5-1 8-4 14-2 4-5 4Z" fill="url(#cpb)" />
              <path d="M9 0h10q3 0 4 4l.8 3H19q-2.500 0-4 3L13 4q-1-4-4-4Z" fill="#1b57bb" />
            </svg>
          </TaskIcon>
          <TaskIcon label="Chrome"><Chrome /></TaskIcon>
          <TaskIcon label="Chrome, meeting window" active>
            <Chrome />
            <span className="absolute -top-[6px] -right-[6px] flex size-5 items-center justify-center rounded-full bg-[#0e94a3] text-[9px] font-bold text-[#a8e0e6]">S</span>
          </TaskIcon>
          <TaskIcon label="Word" running>
            <svg viewBox="0 0 30 28" className="h-7 w-[30px]">
              <path d="M8 0h20q2 0 2 2v5H6V2q0-2 2-2Z" fill="#41a5ee" /><path d="M6 7h24v7H6Z" fill="#2b7cd3" /><path d="M6 14h24v7H6Z" fill="#185abd" />
              <path d="M6 21h24v5q0 2-2 2H8q-2 0-2-2Z" fill="#103f91" /><rect y="6" width="16" height="15" rx="1.500" fill="#174fae" />
              <text x="8" y="18" textAnchor="middle" fontSize="12" fontWeight="700" fill="#fff">W</text>
            </svg>
          </TaskIcon>
          <TaskIcon label="Photos" running>
            <svg viewBox="0 0 26 26" className="size-[26px]">
              <defs><linearGradient id="ph" x2="1" y2="0.600"><stop stopColor="#0f6bc8" /><stop offset="1" stopColor="#7c50b8" /></linearGradient></defs>
              <rect width="26" height="26" rx="3" fill="url(#ph)" /><path d="m0 24 10-12q2-2 4 0l10 13-1 1H3Q0 26 0 24Z" fill="#36c3f2" />
              <path d="m3 26 8-7q2-1.500 4 0l8 7Z" fill="#1478d4" /><circle cx="20" cy="5" r="2.200" fill="#fff" />
            </svg>
          </TaskIcon>
        </div>
      </div>

      <div className="flex items-center justify-end pr-[24px] pb-[2px] text-[14px] leading-[20px]">
        <button aria-label="Hidden icons"><ChevronUp className="size-5" strokeWidth={2} /></button>
        <Mic className="ml-[20px] size-[21px] text-[#1f57a8]" strokeWidth={1.800} />
        <button className="ml-[23px] text-center"><span className="block">ENG</span><span className="block">IN</span></button>
        <button aria-label="Network, volume and battery" className="ml-[22px] flex items-center gap-[9px]">
          <svg viewBox="0 0 20 16" className="h-4 w-5" fill="none" stroke="#1b1b1b" strokeWidth="1.500">
            <path d="M.8 6.500a13 13 0 0 1 18.400 0M3.500 9.200a9.300 9.300 0 0 1 13 0M6.300 11.800a5.500 5.500 0 0 1 7.400 0" /><circle cx="10" cy="14" r="1.400" fill="#1b1b1b" stroke="none" />
          </svg>
          <svg viewBox="0 0 20 16" className="h-4 w-5" fill="none" stroke="#1b1b1b" strokeWidth="1.300">
            <path d="M1 5.500h3L8.500 2v12L4 10.500H1Z" strokeLinejoin="round" /><path d="M11 5.500q1.500 2.500 0 5M13.500 3.500q3 4.500 0 9" /><path d="M16 1.500q4.500 6.500 0 13" stroke="#9aa9ae" />
          </svg>
          <svg viewBox="0 0 22 18" className="h-[18px] w-[22px]">
            <rect x="2" y="4.500" width="16.500" height="11.500" rx="2.500" fill="none" stroke="#1b1b1b" strokeWidth="1.300" /><rect x="4" y="6.500" width="12.500" height="7.500" rx="1" fill="#1b1b1b" />
            <path d="M19 8h2.500v4.500H19Z" fill="#1b1b1b" />
            <path d="M5 0 0 7.500h3.500L2.500 12 7.500 5H4.800Z" fill="#1b1b1b" stroke="#cfe7ee" strokeWidth="1" />
          </svg>
        </button>
        <button className="ml-[20px] text-right text-[15px]"><span className="block">12:30</span><span className="block">03-06-2025</span></button>
      </div>
    </div>
  );
}

export default function App() {
  return (
    <div className={`flex min-h-screen flex-col bg-[#0d0d0d] ${ui}`}>
      <BrowserChrome />
      <MeetingHeader />
      <main className="flex flex-1 flex-col">
        <ParticipantStrip />
        <SharedScreen />
      </main>
      <Controls />
      <Taskbar />
    </div>
  );
}
